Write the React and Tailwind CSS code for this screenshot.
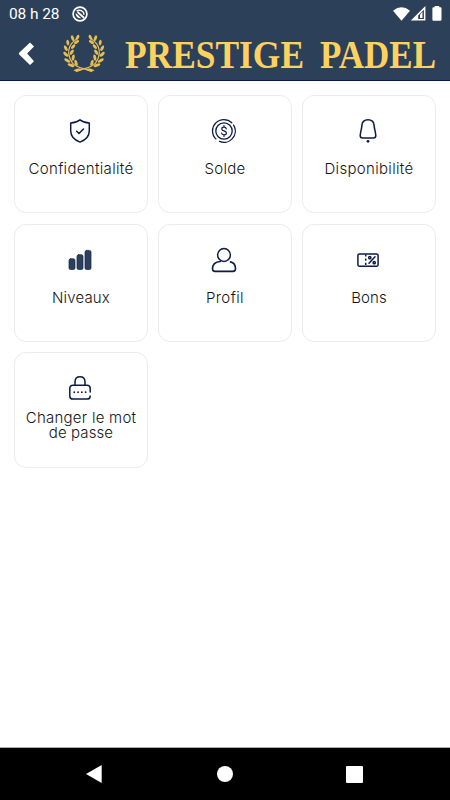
// [x, y, angle, length]
const LEAVES = [
  [4.2, 26.5, 28, 3.3],
  [8, 31.2, 22, 3.5],
  [2.8, 20.3, 42, 3.1],
  [2.8, 14.2, 62, 3],
  [4.8, 8.6, 80, 2.8],
  [9.6, 4.2, 68, 3],
  [14.6, 3.4, -62, 2.8],
  [13.6, 8, -32, 2.9],
  [10.2, 12.6, -48, 2.8],
  [8.8, 18.2, -55, 3],
  [10.2, 23.6, -80, 3.1],
  [13, 28.8, 72, 3.1],
];

function Branch() {
  return (
    <g>
      <path d="M29 37.6C21 33.8 14 34.5 9.4 28.8C4.8 23 4.5 15 8.4 9.8C10 7.6 12 7 13.4 4.8" fill="none" stroke="#e6bf53" strokeWidth="1.2" />
      {LEAVES.map(([x, y, angle, rx]) => (
        <ellipse key={`${x}-${y}`} cx={x} cy={y} rx={rx} ry="1.45" fill="#e6bf53" transform={`rotate(${angle} ${x} ${y})`} />
      ))}
      <path d="M10.5 36.4C13.5 34 17.5 34.2 19.5 35.2C17 37.6 13.5 37.8 10.5 36.4Z" fill="#e6bf53" />
    </g>
  );
}

function Laurel() {
  return (
    <svg viewBox="0 0 42 40" className="h-10 w-[42px] shrink-0" aria-hidden="true">
      <Branch />
      <g transform="matrix(-1 0 0 1 42 0)">
        <Branch />
      </g>
    </svg>
  );
}

function Wordmark() {
  return (
    <svg viewBox="0 0 316 50" className="h-[50px] w-[316px] shrink-0" aria-label="Prestige Padel">
      <g fill="#fbd160" fontFamily="'Liberation Serif', serif" fontWeight="700" fontSize="40">
        <text x="1" y="39" textLength="179" lengthAdjust="spacingAndGlyphs">PRESTIGE</text>
        <text x="196" y="39" textLength="116" lengthAdjust="spacingAndGlyphs">PADEL</text>
      </g>
    </svg>
  );
}

function Icon({ children }) {
  return (
    <svg viewBox="0 0 26 26" className="mr-0.5 size-[26px]" fill="none" stroke="#0d1b45" strokeWidth="1.5" strokeLinecap="round" strokeLinejoin="round">
      {children}
    </svg>
  );
}

const ITEMS = [
  {
    label: "Confidentialité",
    tracking: "tracking-[0.32px]",
    icon: (
      <>
        <path d="M13 1.8C10.4 3.9 7 4.7 3.7 4.9V12.8C3.7 18 7.3 22 13 24.1C18.7 22 22.3 18 22.3 12.8V4.9C19 4.7 15.6 3.9 13 1.8Z" />
        <path d="M9.7 13.3L12 15.5L16.5 11" />
      </>
    ),
  },
  {
    label: "Solde",
    tracking: "tracking-[0.25px]",
    icon: (
      <>
        <circle cx="13" cy="13" r="8.2" strokeWidth="1.3" />
        <path d="M20.8 4.8A11.3 11.3 0 1 0 4.9 20.9M8.5 23.4A11.3 11.3 0 0 0 22.6 7.1" strokeWidth="1.3" />
        <path d="M15.3 10.8C15.1 9.7 14.2 9.2 13 9.2C11.7 9.2 10.8 9.9 10.8 11C10.8 13.5 15.4 12.2 15.4 15C15.4 16.2 14.4 16.9 13 16.9C11.7 16.9 10.8 16.2 10.6 15M13 7.7V9M13 17V18.4" strokeWidth="1.2" />
      </>
    ),
  },
  {
    label: "Disponibilité",
    tracking: "tracking-[0.32px]",
    icon: (
      <>
        <path d="M13 1.7C9.4 1.7 7.2 4 6.9 7.4C6.7 10.8 5.4 14.3 5.2 17.4C5.2 19.2 6 19.9 7.5 19.9H18.5C20 19.9 20.8 19.2 20.8 17.4C20.6 14.3 19.3 10.8 19.1 7.4C18.8 4 16.6 1.7 13 1.7Z" />
        <circle cx="13" cy="23.3" r="1.4" fill="#0d1b45" stroke="none" />
      </>
    ),
  },
  {
    label: "Niveaux",
    tracking: "tracking-[0.15px]",
    icon: (
      <g fill="#2d405a" stroke="#0d2350" strokeWidth="0.7">
        <rect x="2" y="11.8" width="6" height="10.7" rx="1.6" />
        <rect x="10" y="7.7" width="6" height="14.8" rx="1.6" />
        <rect x="18" y="3.4" width="6" height="19.1" rx="1.6" />
      </g>
    ),
  },
  {
    label: "Profil",
    tracking: "tracking-[0.4px]",
    icon: (
      <>
        <circle cx="13" cy="8" r="6.4" />
        <path d="M9.3 14.5C4.2 14.9 1.5 17.5 1.5 21.8C1.5 23.8 2.3 24.4 4 24.4H22C23.7 24.4 24.5 23.8 24.5 21.8C24.5 18.4 22.8 15.7 19.5 14.9" strokeWidth="1.6" />
      </>
    ),
  },
  {
    label: "Bons",
    tracking: "tracking-[0.1px]",
    icon: (
      <>
        <rect x="2.9" y="7" width="20.2" height="12.2" rx="1.4" />
        <path d="M10.7 7.4V19" strokeDasharray="2.2 2" strokeLinecap="butt" />
        <path d="M20 9.8L14 16.3" />
        <circle cx="14.8" cy="10.7" r="1.1" />
        <circle cx="19.2" cy="15.7" r="1.1" />
      </>
    ),
  },
];

function Card({ item }) {
  return (
    <div className="flex h-[118px] flex-col items-center rounded-[12px] border border-[#ececec] pt-[22px]">
      <Icon>{item.icon}</Icon>
      <span className={`mt-4 text-[15px] leading-[18px] ${item.tracking}`}>{item.label}</span>
    </div>
  );
}

export default function App() {
  return (
    <div className="flex h-[800px] w-[450px] flex-col overflow-hidden bg-white font-['Inter','Open_Sans',sans-serif]">
      <header className="h-[81px] shrink-0 border-b border-[#061c46] bg-[#2d405a]">
        <div className="flex h-7 items-center pl-[9px] font-[Roboto,sans-serif] text-white">
          <span className="w-[62px] pt-px text-[15.5px] tracking-[-0.1px] whitespace-nowrap">08 h 28</span>
          <svg viewBox="0 0 18 18" className="-mt-px size-[18px]" fill="none" stroke="white">
            <circle cx="9" cy="9" r="6.9" strokeWidth="1.7" />
            <path d="M5.6 6.2A4.6 4.6 0 0 1 13 9.6" strokeWidth="1.5" />
            <path d="M4.8 8A4.4 4.4 0 0 0 10.2 13.2Z" fill="white" stroke="none" />
            <path d="M6.6 7L13.2 13" strokeWidth="1.7" />
          </svg>
          <svg viewBox="0 0 52 18" className="-mt-px mr-[7px] ml-auto h-[18px] w-[52px]" fill="white">
            <path d="M2 5.7Q10.5-1 19 5.7L10.5 15.8Z" />
            <path fillRule="evenodd" d="M34.4 1V15.6H19.8ZM32.9 4.7L27.2 10.4V14H32.9Z" />
            <path d="M29 9.6L31.5 7V13H29Z" />
            <path d="M41.4 3.2Q41.4 2.2 42.4 2.2H43.7V1H48.2V2.2H49.5Q50.5 2.2 50.5 3.2V14.7Q50.5 15.7 49.5 15.7H42.4Q41.4 15.7 41.4 14.7Z" />
          </svg>
        </div>
        <div className="flex h-[52px] items-center pl-[18px]">
          <svg viewBox="0 0 17 24" className="h-6 w-[17px] shrink-0" fill="white" aria-hidden="true">
            <path d="M12 0.5L16 4.5L9.1 11.6L16 19.2L12 23L0.9 12.3V11.1Z" />
          </svg>
          <div className="ml-7 mr-[19px]">
            <Laurel />
          </div>
          <Wordmark />
        </div>
      </header>

      <main className="grid flex-1 auto-rows-max grid-cols-3 gap-x-[10px] gap-y-[10.7px] px-[14px] pt-[14px] font-light text-[#151515]">
        {ITEMS.map((item) => (
          <Card key={item.label} item={item} />
        ))}
        <div className="flex h-[116px] flex-col items-center rounded-[12px] border border-[#ececec] pt-[22px]">
          <Icon>
            <path d="M8 10V6.8C8 3.7 10 1.8 13 1.8S18 3.7 18 6.8V10" />
            <path d="M23.2 17V13.5C23.2 11.4 22 10.3 20 10.3H6C4 10.3 2.8 11.4 2.8 13.5V20.9C2.8 23 4 24.1 6 24.1H20C22 24.1 23.2 23 23.2 20.9" />
            <path d="M7.2 17.2H18.9" strokeWidth="1.7" strokeDasharray="0.1 3.7" />
          </Icon>
          <div className="mt-[10px] flex flex-col items-center text-[15px] leading-[14.5px] whitespace-nowrap">
            <span className="tracking-[0.25px]">Changer le mot</span>
            <span className="tracking-[0.1px]">de passe</span>
          </div>
        </div>
      </main>

      <nav className="flex h-[53px] shrink-0 items-center justify-between border-t border-[#aaa] bg-black pl-[85px] pr-[87px]">
        <svg viewBox="0 0 18 20" className="h-5 w-[18px]" fill="white">
          <path d="M16.7 1V19L1 10Z" />
        </svg>
        <span className="size-4 rounded-full bg-white" />
        <span className="size-[17px] rounded-[1px] bg-white" />
      </nav>
    </div>
  );
}
